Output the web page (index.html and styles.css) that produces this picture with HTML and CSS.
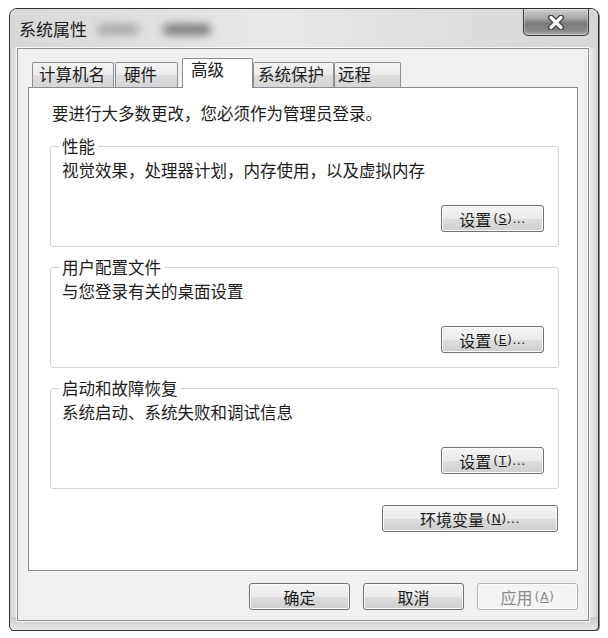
FILE: index.html
```html
<!DOCTYPE html>
<html lang="zh-CN">
<head>
<meta charset="utf-8">
<title>系统属性</title>
<link rel="stylesheet" href="styles.css">
</head>
<body>
<div class="window">
  <div class="titlebar">
    <span class="title">系统属性</span>
    <span class="blur blur-light"></span>
    <span class="blur blur-dark"></span>
    <div class="close">
      <svg width="20" height="15" viewBox="0 0 20 15">
        <path d="M5 2.5 L15 12.5 M15 2.5 L5 12.5" stroke="#3a3a3a" stroke-width="6" stroke-linecap="round" fill="none"/>
        <path d="M5 2.5 L15 12.5 M15 2.5 L5 12.5" stroke="#ffffff" stroke-width="3.4" stroke-linecap="round" fill="none"/>
      </svg>
    </div>
  </div>
  <div class="client">
    <div class="tabs">
      <div class="tab tab-name">计算机名</div>
      <div class="tab tab-hw">硬件</div>
      <div class="tab tab-adv selected">高级</div>
      <div class="tab tab-prot">系统保护</div>
      <div class="tab tab-remote">远程</div>
    </div>
    <div class="panel">
      <p class="note">要进行大多数更改，您必须作为管理员登录。</p>
      <fieldset class="group first">
        <legend>性能</legend>
        <p class="desc">视觉效果，处理器计划，内存使用，以及虚拟内存</p>
        <div class="row"><div class="btn set">设置<span class="acc">(<u>S</u>)...</span></div></div>
      </fieldset>
      <fieldset class="group">
        <legend>用户配置文件</legend>
        <p class="desc">与您登录有关的桌面设置</p>
        <div class="row"><div class="btn set">设置<span class="acc">(<u>E</u>)...</span></div></div>
      </fieldset>
      <fieldset class="group">
        <legend>启动和故障恢复</legend>
        <p class="desc">系统启动、系统失败和调试信息</p>
        <div class="row"><div class="btn set">设置<span class="acc">(<u>T</u>)...</span></div></div>
      </fieldset>
      <div class="row env-row"><div class="btn env">环境变量<span class="acc">(<u>N</u>)...</span></div></div>
    </div>
    <div class="footer">
      <div class="btn foot">确定</div>
      <div class="btn foot">取消</div>
      <div class="btn foot disabled">应用<span class="acc">(<u>A</u>)</span></div>
    </div>
  </div>
</div>
</body>
</html>
```

FILE: styles.css
```css
html, body {
  margin: 0;
  padding: 0;
  background: #ffffff;
}

body {
  font-family: "Noto Sans CJK SC", "Noto Sans", sans-serif;
  color: #1c1c1c;
}

.window {
  box-sizing: border-box;
  width: 590px;
  height: 623px;
  margin: 8px 0 0 9px;
  border: 1px solid #2e2e2e;
  border-radius: 8px 8px 5px 5px;
  padding: 0 9px 9px 7px;
  display: flex;
  flex-direction: column;
  background:
    linear-gradient(to bottom, transparent 0, transparent 608px, #c8c8c8 608px, #e8e8e8 620px),
    linear-gradient(to right, #cfcfcf 0, #e6e6e6 5px, #e6e6e6 582px, #d0d0d0 588px),
    #e4e4e4;
  box-shadow: 1px 1px 0 #8a8a8a;
}

.titlebar {
  height: 39px;
  display: flex;
  align-items: flex-start;
  background: linear-gradient(to right, #d8d8d8, #e9e9e9 45%, #dcdcdc 80%, #d6d6d6);
  margin: 0 -9px 0 -7px;
  padding: 0 9px 0 9px;
  border-radius: 7px 7px 0 0;
}

.title {
  font-size: 17px;
  line-height: 20px;
  padding-top: 10px;
  color: #1a1a1a;
  white-space: nowrap;
}

.blur {
  display: block;
  height: 11px;
  margin-top: 15px;
  border-radius: 5px;
  filter: blur(4px);
}

.blur-light {
  width: 42px;
  margin-left: 10px;
  background: #a9a9a9;
}

.blur-dark {
  width: 48px;
  margin-left: 24px;
  background: #7a7a7a;
}

.close {
  margin-left: auto;
  box-sizing: border-box;
  width: 66px;
  height: 27px;
  border: 1px solid #3a3a3a;
  border-top: none;
  border-radius: 0 0 5px 5px;
  background: linear-gradient(#d2d2d2 0%, #a8a8a8 35%, #7a7a7a 55%, #8a8a8a 85%, #b0b0b0 100%);
  box-shadow: inset 0 0 0 1px rgba(255, 255, 255, 0.35);
  display: flex;
  align-items: center;
  justify-content: center;
}

.client {
  flex: 1;
  border: 1px solid #8e8e8e;
  background: #f0f0f0;
  box-shadow: 0 0 0 1px #f8f8f8;
  padding: 0 10px 0 10px;
  display: flex;
  flex-direction: column;
}

.tabs {
  height: 38px;
  display: flex;
  align-items: flex-end;
  padding-left: 4px;
}

.tab {
  box-sizing: border-box;
  height: 25px;
  border: 1px solid #8c8e94;
  border-bottom: none;
  border-radius: 2px 2px 0 0;
  background: linear-gradient(#f4f4f4 0%, #ebebeb 50%, #dddddd 51%, #d6d6d6 100%);
  font-size: 16.5px;
  line-height: 22px;
  padding-left: 6px;
  white-space: nowrap;
}

.tab-name { width: 82px; }
.tab-hw { width: 63px; margin-left: 1px; padding-left: 8px; }
.tab-adv { width: 71px; margin-left: 4px; }
.tab-prot { width: 81px; padding-left: 4px; }
.tab-remote { width: 67px; padding-left: 3px; }

.tab.selected {
  height: 30px;
  background: #ffffff;
  padding-left: 8px;
  line-height: 20px;
  position: relative;
  z-index: 1;
  margin-bottom: -1px;
}

.panel {
  box-sizing: border-box;
  height: 484px;
  border: 1px solid #898c95;
  background: #ffffff;
  padding: 15px 18px 0 21px;
}

.note {
  margin: 0 0 0 2px;
  font-size: 16.5px;
  line-height: 20px;
}

.group {
  margin: 10px 0 0 0;
  border: 1px solid #d2d6da;
  border-radius: 3px;
  padding: 4px 14px 14px 11px;
}

.group.first {
  margin-top: 13px;
}

.group legend {
  font-size: 16.5px;
  line-height: 20px;
  padding: 0 3px;
  margin-left: -3px;
}

.desc {
  margin: 0;
  font-size: 16.5px;
  line-height: 20px;
  white-space: nowrap;
}

.row {
  display: flex;
  justify-content: flex-end;
  margin-top: 25px;
}

.env-row {
  margin-top: 16px;
  margin-right: 1px;
}

.btn {
  box-sizing: border-box;
  height: 27px;
  border: 1px solid #707070;
  border-radius: 3px;
  background: linear-gradient(#f3f3f3 0%, #ebebeb 50%, #dddddd 51%, #cfcfcf 100%);
  box-shadow: inset 0 0 0 1px #fbfbfb;
  display: flex;
  align-items: center;
  justify-content: center;
  font-size: 16px;
  line-height: 20px;
  color: #1a1a1a;
  white-space: nowrap;
}

.acc {
  font-family: "DejaVu Sans", sans-serif;
  font-size: 12.5px;
  margin-left: 2px;
  letter-spacing: 0.5px;
}

.set {
  width: 103px;
}

.env {
  width: 176px;
}

.footer {
  display: flex;
  justify-content: flex-end;
  gap: 13px;
  margin-top: 12px;
}

.foot {
  width: 101px;
}

.foot.disabled {
  color: #8a8a8a;
  border-color: #adb2b5;
  background: #f4f4f4;
}
```
